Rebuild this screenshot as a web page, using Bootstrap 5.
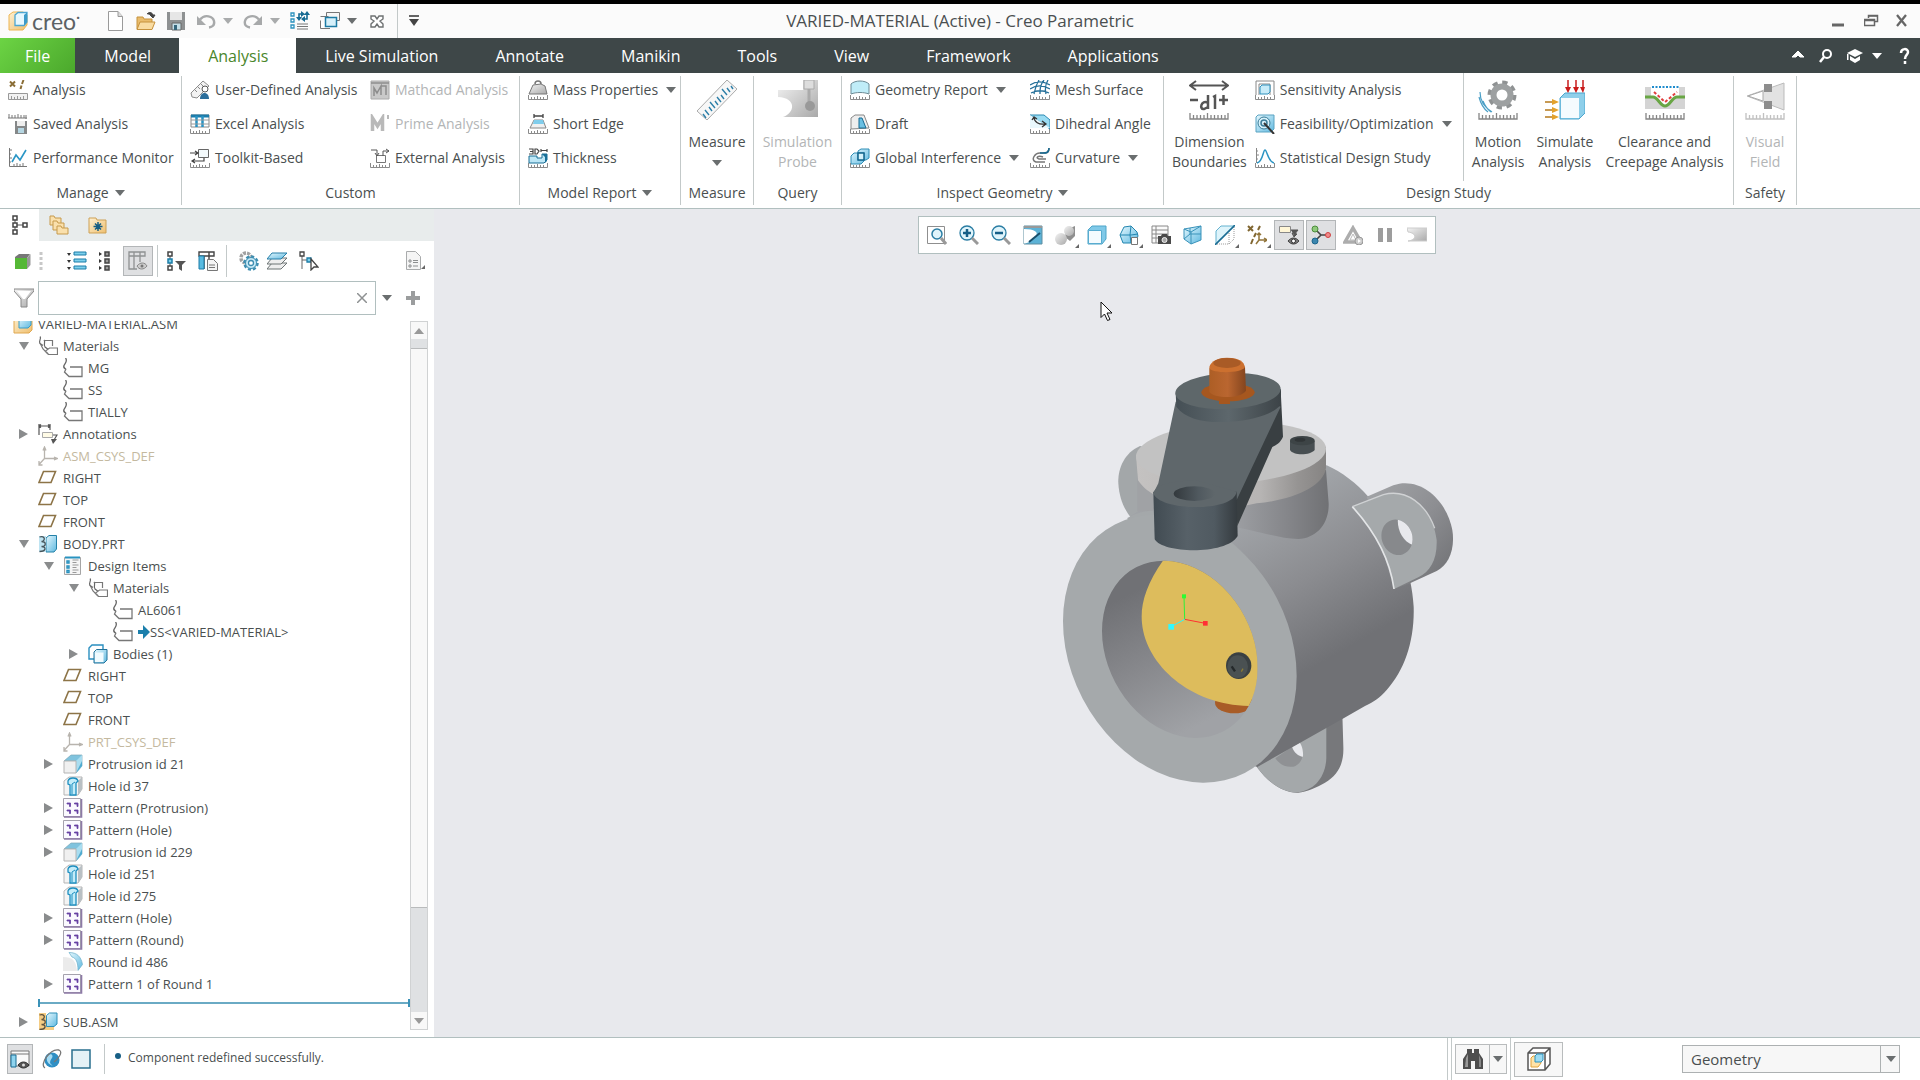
<!DOCTYPE html>
<html lang="en">
<head>
<meta charset="utf-8">
<meta name="viewport" content="width=device-width, initial-scale=1">
<title>VARIED-MATERIAL (Active) - Creo Parametric</title>
<link href="https://cdn.jsdelivr.net/npm/bootstrap@5.3.0/dist/css/bootstrap.min.css" rel="stylesheet">
<style>
  :root { --ink:#4a4f50; --edge:#b1bfbf; --line:#c3c9c9; --canvas:#e8e9ed; }
  body { font-family:"Open Sans","Noto Sans",sans-serif; font-size:14px; line-height:20px; color:var(--ink); background:#fff; border-top:4px solid #000; overflow:hidden; }
  body > header, body > nav, body > .ribbon, body > footer { flex-shrink:0; }
  svg { display:block; flex:none; }
  button { border:0; background:none; padding:0; color:inherit; font:inherit; }
  .ico { width:20px; height:20px; }
  .big { width:40px; height:40px; }
  .tri { width:0; height:0; border:5px solid transparent; border-top:6px solid #6a6e6f; border-bottom:0; flex:none; }
  .tri.pale { border-top-color:#a9abac; }
  .vline { width:1px; background:var(--line); align-self:stretch; flex:none; }
  /* title */
  .titlebar { height:34px; background:#fbfbfb; }
  .titlebar .side { flex:1 1 0; }
  .quick { gap:10px; }
  .quick .duo { display:flex; align-items:center; gap:7px; }
  .apptitle { font-size:17px; line-height:24px; }
  .logo { width:88px; }
  .brand { font-family:"Lato",sans-serif; font-size:23px; line-height:24px; color:#5c6264; }
  /* ribbon tabs */
  .tabstrip { height:35px; background:#3e4748; }
  .tabstrip a { color:#fff; font-size:16px; padding:0 28px 0 29px; text-decoration:none; }
  .tabstrip a.filetab { background:linear-gradient(135deg,#6cd444,#4ba82c); padding:0 25px; }
  .tabstrip a.current { background:#fff; color:#49862a; }
  /* ribbon */
  .ribbon { height:136px; border-bottom:1px solid var(--edge); background:#fff; }
  .grp { border-right:1px solid var(--line); margin:3px 0; flex:none; }
  .grp .foot { height:24px; display:flex; align-items:center; justify-content:center; gap:6px; }
  .grp .body { height:108px; padding-left:8px; margin-top:-3px; }
  .cmd { height:34px; display:flex; align-items:center; gap:5px; white-space:nowrap; text-align:left; }
  .cmd .tri { margin-left:3px; }
  .off { color:#b3b5b6; }
  .tall { display:flex; flex-direction:column; align-items:center; justify-content:flex-start; padding-top:7px; text-align:center; white-space:nowrap; }
  .tall svg { margin-bottom:12px; }
  .w-manage { width:182px; } .w-custom { width:338px; } .w-report { width:161px; } .w-measure { width:73px; }
  .w-query { width:88px; } .w-inspect { width:322px; } .w-study { width:570px; } .w-safety { width:63px; }
  .col-a { width:180px; } .col-b { width:208px; }
  /* left panel */
  .tree-pane { width:434px; background:#fff; }
  .pane-tabs { height:32px; background:#e8ecec; }
  .pane-tabs button { height:32px; width:39px; display:flex; align-items:center; justify-content:center; }
  .pane-tabs button.current { background:#fff; }
  .pane-tools { height:40px; padding:4px 0 4px 15px; }
  .pressed { background:#dfe0e2; border:1px solid #b3b6b8; }
  .find-row { padding-left:14px; }
  .find { width:338px; height:34px; border:1px solid var(--edge); }
  .find input { border:0; outline:0; height:30px; }
  .find-more { margin-left:6px; }
  .find-add { margin-left:14px; }
  .tree { font-size:13px; margin:6px 0 7px; }
  .tree ul { list-style:none; margin:0; padding:0; }
  .tree ul ul ul { padding-left:25px; }
  .tree ul.first { margin-top:-8px; padding-left:13px; }
  .node { height:22px; display:flex; align-items:center; gap:5px; white-space:nowrap; }
  .node .tw { width:20px; flex:none; padding-left:6px; }
  .dn { width:0; height:0; display:block; border:5px solid transparent; border-top:8px solid #8a8c8d; border-bottom:0; }
  .rt { width:0; height:0; display:block; border:5px solid transparent; border-left:9px solid #8a8c8d; border-right:0; }
  .faint { color:#c4b9a0; }
  .insert { height:16px; margin-left:25px; }
  .insert span { height:2px; background:#6aaac4; }
  .bar { width:18px; border:1px solid #d0d2d3; background:#dfe1e3; margin-right:6px; }
  .bar .arrow { height:17px; background:#f8f8f8; }
  .bar .thumb { background:#f8f8f8; border:1px solid #b9bbbc; border-width:1px 0; margin-top:9px; height:560px; }
  /* canvas */
  .canvas { background:var(--canvas); position:relative; overflow:hidden; min-width:0; }
  .floatbar { background:#fff; border:1px solid var(--edge); height:38px; padding:0 2px; margin-top:7px; z-index:2; }
  .floatbar button { width:30px; height:30px; margin:0 1px; display:flex; align-items:center; justify-content:center; position:relative; }
  .more::after { content:""; position:absolute; right:1px; bottom:2px; border:2px solid transparent; border-right-color:#666; border-bottom-color:#666; }
  .model { position:absolute; left:calc(50% - 137px); top:131px; width:440px; height:480px; }
  .pointer { position:absolute; left:calc(50% - 77px); top:92px; }
  /* status */
  .status { height:43px; border-top:1px solid var(--edge); }
  .status-left { gap:9px; padding-left:7px; }
  .status-left .pressed { width:26px; height:30px; padding:4px 2px; }
  .status-left .vline { height:30px; align-self:center; margin-left:4px; }
  .msg { font-size:12px; margin:0 0 3px 10px; gap:7px; }
  .msg i { width:6px; height:6px; border-radius:50%; background:#175f85; margin-top:-4px; }
  .status-right { gap:3px; }
  .box { border:1px solid #b9bcbd; background:#f7f7f7; }
  .seek { height:30px; width:52px; }
  .seek .seek-main { width:33px; display:flex; align-items:center; justify-content:center; }
  .seek .seek-more { width:17px; border-left:1px solid #b9bcbd; display:flex; align-items:center; justify-content:center; }
  .boxbtn { height:35px; width:49px; display:flex; align-items:center; justify-content:center; }
  .pick { width:218px; height:28px; margin:0 20px 0 119px; }
  .pick select { appearance:none; border:1px solid #adb1b2; background:#f7f7f7; color:var(--ink); border-radius:0; padding:0 8px; height:28px; width:100%; font-size:15px; }
  .pick span { position:absolute; right:0; top:0; width:20px; height:28px; border-left:1px solid #adb1b2; pointer-events:none; display:flex; align-items:center; justify-content:center; }
</style>
<script src="https://cdn.jsdelivr.net/npm/bootstrap@5.3.0/dist/js/bootstrap.bundle.min.js"></script>
</head>
<body class="vh-100 d-flex flex-column">

<svg width="0" height="0" class="position-absolute" aria-hidden="true">
  <defs>
    <linearGradient id="gBlue" x1="0" y1="0" x2="1" y2="1"><stop offset="0" stop-color="#e6f8fe"/><stop offset="1" stop-color="#5fb9e0"/></linearGradient>
    <linearGradient id="gGrey" x1="0" y1="0" x2="1" y2="1"><stop offset="0" stop-color="#f4f4f4"/><stop offset="1" stop-color="#a9a9a9"/></linearGradient>
    <linearGradient id="gTan" x1="0" y1="0" x2="1" y2="1"><stop offset="0" stop-color="#fff1d2"/><stop offset="1" stop-color="#eebf70"/></linearGradient>
    <symbol id="rl" viewBox="0 0 20 20"><path d="M.5 15v4.500h19V15M3.500 19v-2M6.500 19v-2M9.500 19v-3M12.500 19v-2M15.500 19v-2" fill="none" stroke="#8b8b8b"/></symbol>
    <symbol id="RL" viewBox="0 0 40 40"><path d="M1 33v6h38v-6M4.500 39v-4M8 39v-4M11.500 39v-4M15 39v-4M18.500 39v-6M22 39v-4M25.500 39v-4M29 39v-4M32.500 39v-4M36 39v-4" fill="none" stroke="#858585" stroke-width="1.300"/></symbol>
    <symbol id="tag" viewBox="0 0 20 20"><path d="M2.500 0c2.500 3-.5 5-1.500 7.500s1 3.500 4 5" fill="none" stroke="#666" stroke-width="1.300"/><path d="M7 9h12v9.500H6L1.500 14 3 11" fill="#fff" stroke="#777" stroke-width="1.300"/></symbol>
    <symbol id="tags" viewBox="0 0 20 20"><path d="M2 .5c2 2-2 5 0 7l3 2M6 4c2 2-1 4 1 7l4 3" fill="none" stroke="#666" stroke-width="1.200"/><path d="M7 4.500h7.500V10M2 7l3 6 5 5" fill="none" stroke="#777" stroke-width="1.200"/><path d="M11.500 12h8v6.500h-9L7.500 15z" fill="#fff" stroke="#777" stroke-width="1.200"/></symbol>
    <symbol id="plane" viewBox="0 0 20 20"><path d="M5.500 3.500h12l-4.500 11H1z" fill="#fff" stroke="#8d7447" stroke-width="1.600"/></symbol>
    <symbol id="csys" viewBox="0 0 20 20"><path d="M6.500 2v10.500h12M6.500 12.500L1 18.500M5 4.500L6.500 1 8 4.500M16 11l3.500 1.500L16 14M1 15v4h3.500" fill="none" stroke="#b8b4ae" stroke-width="1.300"/></symbol>
    <symbol id="anno" viewBox="0 0 20 20"><path d="M1 0v11M12 0v6M1 2h11M3 .5L1 2l2 1.500M10 .5L12 2l-2 1.500M15 11h4l-3 5" fill="none" stroke="#555" stroke-width="1.200"/><path d="M4.500 8.500h10v5h-10z" fill="#fffbe6" stroke="#aaa"/><path d="M13 15h6l-4 5z" fill="#555"/></symbol>
    <symbol id="asm" viewBox="0 0 20 20"><path d="M1 4l3-3h12v4h3v11l-3 3H1z" fill="url(#gTan)" stroke="#e0a850"/><path d="M6 4l2-2h10v9l-3 3H6z" fill="url(#gBlue)" stroke="#3a9cc6"/></symbol>
    <symbol id="part" viewBox="0 0 20 20"><path d="M8 4l3-2.500h7.500V15L16 18H8z" fill="url(#gBlue)" stroke="#2481a8"/><path d="M1 2h7v16H1z" fill="#bfe4f2"/><path d="M1.500 3c6-2 6 4 2 4.500 5 0 5 5 0 5 5 0 5 5-2 5" fill="none" stroke="#46545a" stroke-width="1.300"/></symbol>
    <symbol id="subasm" viewBox="0 0 20 20"><path d="M1 1h7v17H1zM8 14h8v4H8z" fill="#f5cd84"/><path d="M8.500 3.500l3-2.500h7.500v11l-3 2.500H8.500z" fill="url(#gBlue)" stroke="#2e8fb8"/><path d="M1.500 3c6-2 6 4 2 4.500 5 0 5 5 0 5 5 0 5 5-2 5" fill="none" stroke="#5d5240" stroke-width="1.300"/></symbol>
    <symbol id="items" viewBox="0 0 20 20"><path d="M1.500 1.500h16v17h-16z" fill="#f5f5f5" stroke="#a5a5a5"/><path d="M2 1.500h15" stroke="#2893c0" stroke-width="2"/><path d="M4 5h2v2H4zM4 10h2v2H4zM4 14.500h2v2H4z" fill="#fff" stroke="#2590be" stroke-width="1.400"/><path d="M9.500 4h6M9.500 6.500h4M9.500 9h6M9.500 11.500h4M9.500 14h6M9.500 16.500h4" stroke="#999"/></symbol>
    <symbol id="bodies" viewBox="0 0 20 20"><path d="M1 4l3-3h11v12l-3 2H1z" fill="#fff" stroke="#2a8fc0" stroke-width="1.400"/><path d="M6 8l2.500-2.500H19V16l-3 3H6z" fill="url(#gBlue)" stroke="#23729a"/><path d="M7 8.500h8.500V18H7z" fill="#f1fbff"/></symbol>
    <symbol id="prot" viewBox="0 0 20 20"><path d="M1 7l7-6h11v11l-6 7V7z" fill="#7fc3de" stroke="#7ba6b8" stroke-width=".7"/><path d="M19 1l-6 6v12l6-7z" fill="#a9ddf0"/><path d="M13 19l6-12v5z" fill="#4fabd0"/><path d="M1 7h12v12H1z" fill="#f0f0f0" stroke="#b4b4b4"/></symbol>
    <symbol id="hole" viewBox="0 0 20 20"><path d="M1 5l5-4h13v12l-4 6H1z" fill="#f4f4f4" stroke="#b5b5b5"/><path d="M15 5l4-4v12l-4 6z" fill="#b9c0c4"/><path d="M5 8V5c1-4 9-4 10 0l-2 2v12H7V9z" fill="#c4ecf9" stroke="#1e8fc0" stroke-width="1.300"/><path d="M9 18V8l3-2" fill="none" stroke="#1e8fc0"/></symbol>
    <symbol id="patt" viewBox="0 0 20 20"><path d="M.5.500h17v18H.5z" fill="#fbfaff" stroke="#a5a2ad"/><path d="M18.500 1v18H1" fill="none" stroke="#8d7aa6" stroke-width="1.600"/><path d="M4 5h3.500v3.500h-1V6H4zM11.500 5H15v3.500h-1V6h-2.500zM4 12h3.500v3.500h-1V13H4zM11.500 12H15v3.500h-1V13h-2.500z" fill="#6842a3" stroke="#6842a3" stroke-width=".8"/></symbol>
    <symbol id="round" viewBox="0 0 20 20"><path d="M0 5c10 0 13 4 14 14H0z" fill="#ebebeb"/><path d="M6 .5c8 0 12 4 13.500 12L15 18.500C15 10 13 6 9 5z" fill="url(#gBlue)" stroke="#68aec8" stroke-width=".7"/></symbol>
    <symbol id="undo" viewBox="0 0 20 20"><path d="M4 8.500c5-6 13-3 14 1.500s-2 6-5 6.500" fill="none" stroke="#a7a9aa" stroke-width="2.400"/><path d="M1 5v9h9z" fill="#a7a9aa"/></symbol>
  </defs>
</svg>

<header class="titlebar d-flex align-items-center">
  <div class="quick side d-flex align-items-center align-self-stretch ps-2">
    <span class="logo d-flex align-items-center gap-1">
      <svg class="ico" viewBox="0 0 20 20"><path d="M1 4l4-3h10l4 3v10l-4 5H1z" fill="url(#gTan)" stroke="#edb552"/><path d="M7 4l3-2.500h9V11l-3 3.500H7z" fill="#e7f8ff" stroke="#4ca6d2" stroke-width="1.300"/><path d="M16 4l3-2.500V11l-3 3.500z" fill="#3c9bc9"/></svg>
      <span class="brand">creo<sup class="fs-6">·</sup></span>
    </span>
    <button aria-label="New"><svg class="ico" viewBox="0 0 20 20"><path d="M2.500.500h9.500l4.500 5v14h-14z" fill="#fff" stroke="#9a9a9a"/><path d="M12 .5v5h4.500" fill="#ddd" stroke="#9a9a9a"/></svg></button>
    <button aria-label="Open"><svg class="ico" viewBox="0 0 20 20"><path d="M1 18V6h6l1 2h8v10z" fill="#e9bc6c" stroke="#c6923d"/><path d="M1 18.500L4 11h15l-3 7.500z" fill="#f9dca2" stroke="#c6923d"/><path d="M11 3c3-3 6-1 6 2M14 4h5l-2 3z" fill="#444" stroke="#444"/></svg></button>
    <button aria-label="Save"><svg class="ico" viewBox="0 0 20 20"><path d="M1 1h18v18H1z" fill="#8e9192"/><path d="M4 1h12v8H4z" fill="#e6e6e6"/><path d="M6 12h9v7H6z" fill="#c4dfe8" stroke="#666"/><path d="M8 14h3v5H8z" fill="#35667b"/></svg></button>
    <button class="duo" aria-label="Undo"><svg class="ico"><use href="#undo"/></svg><i class="tri pale"></i></button>
    <button class="duo" aria-label="Redo"><svg class="ico" viewBox="0 0 20 20"><g transform="matrix(-1 0 0 1 20 0)"><use href="#undo" width="20" height="20"/></g></svg><i class="tri pale"></i></button>
    <button aria-label="Regenerate"><svg class="ico" viewBox="0 0 20 20"><path d="M1 2h3v3H1zM1 8h3v3H1zM1 14h3v3H1z" fill="#fff" stroke="#2d92be" stroke-width="1.300"/><path d="M7 13h11M7 15.500h11M7 18h11" stroke="#777"/><path d="M9 7V3h3M17 3v5h-3" fill="none" stroke="#176b93" stroke-width="1.600"/><path d="M11 0l4 3-4 3zM15 5l-4 3 4 3zM6 6l3 4 3-4zM14 4l3-4 3 4z" fill="#176b93"/></svg></button>
    <button class="duo" aria-label="Windows"><svg class="ico" viewBox="0 0 20 20"><path d="M6.500 1.500h13v8h-13z" fill="#f6f6f6" stroke="#777"/><path d="M.5 9.500v8H10M.5 5.500h8" fill="#fff" stroke="#777"/><path d="M5.500 6.500h11v9h-11z" fill="#d6f0fa" stroke="#1d7ba5" stroke-width="1.500"/></svg><i class="tri"></i></button>
    <button aria-label="Close window"><svg class="ico" viewBox="0 0 20 20"><path d="M4 5h4l2 3 2-3h4v3l-3 2 3 3v3h-4l-2-3-2 3H4v-3l3-3-3-2z" fill="#fff" stroke="#6e7172" stroke-width="1.400"/></svg></button>
    <span class="vline"></span>
    <button aria-label="Customize"><svg width="12" height="14" viewBox="0 0 12 14"><path d="M1 2h10" stroke="#333" stroke-width="1.500"/><path d="M1 5h10l-5 7z" fill="#444"/></svg></button>
  </div>
  <div class="apptitle">VARIED-MATERIAL (Active) - Creo Parametric</div>
  <div class="side d-flex justify-content-end align-items-center gap-3 pe-2">
    <button aria-label="Minimize"><svg width="16" height="16"><path d="M0 12h12" stroke="#666" stroke-width="3"/></svg></button>
    <button aria-label="Restore"><svg width="16" height="16" viewBox="0 0 16 16"><path d="M4.500 5V2.500h9v6H11" fill="none" stroke="#666" stroke-width="1.500"/><path d="M.5 6.500h10v6H.5zM4.500 3h9M1 7.500h9" fill="none" stroke="#666" stroke-width="1.500"/></svg></button>
    <button aria-label="Close"><svg width="16" height="16"><path d="M1 2l9 11M10 2L1 13" stroke="#666" stroke-width="2.300"/></svg></button>
  </div>
</header>

<nav class="tabstrip d-flex">
  <a class="filetab d-flex align-items-center" href="#">File</a>
  <a class="d-flex align-items-center" href="#">Model</a>
  <a class="current d-flex align-items-center" href="#">Analysis</a>
  <a class="d-flex align-items-center" href="#">Live Simulation</a>
  <a class="d-flex align-items-center" href="#">Annotate</a>
  <a class="d-flex align-items-center" href="#">Manikin</a>
  <a class="d-flex align-items-center" href="#">Tools</a>
  <a class="d-flex align-items-center" href="#">View</a>
  <a class="d-flex align-items-center" href="#">Framework</a>
  <a class="d-flex align-items-center" href="#">Applications</a>
  <div class="ms-auto d-flex align-items-center gap-2 pe-2">
    <button aria-label="Collapse ribbon"><svg width="16" height="16"><path d="M2 9l6-6 6 6h-4L8 7 6 9z" fill="#fff" stroke="#fff"/></svg></button>
    <button class="ms-1" aria-label="Search"><svg width="16" height="16"><circle cx="9" cy="6" r="4" fill="none" stroke="#fff" stroke-width="2"/><path d="M6 9l-4 5" stroke="#fff" stroke-width="2.500"/></svg></button>
    <button class="ms-1 d-flex align-items-center gap-2" aria-label="Learning"><svg width="18" height="16"><path d="M1 5l8-4 8 4-8 4z" fill="#fff"/><path d="M4 8v4l5 3 5-3V8l-5 3zM1 6h1.500v6H1z" fill="#fff"/></svg><svg width="10" height="8"><path d="M0 1h10L5 7z" fill="#fff"/></svg></button>
    <button class="ms-2" aria-label="Help"><svg width="14" height="18" viewBox="0 0 14 18"><path d="M3 6c0-5 7-5 7-1 0 3-3 3-3 7M7 14v3" fill="none" stroke="#fff" stroke-width="2.500"/></svg></button>
  </div>
</nav>

<section class="ribbon d-flex" aria-label="Analysis ribbon">
  <div class="grp w-manage">
    <div class="body">
      <button class="cmd"><svg class="ico" viewBox="0 0 20 20"><path d="M2 1.500l5 5M7 1.500l-5 5M15.500 0l-1.500 4M13.500 5.500L12.500 9" stroke="#8a6d35" stroke-width="2"/><path d="M.5 13.500h19v6H.5z" fill="#f2f2f2" stroke="#999"/><path d="M3.500 19v-3M6.500 19v-2M9.500 19v-3M12.500 19v-2M15.500 19v-3" stroke="#999"/></svg>Analysis</button>
      <button class="cmd"><svg class="ico" viewBox="0 0 20 20"><path d="M0 4h19M1 4V0M4 4V1M7 4V1M10 4V0M13 4V1M16 4V1M18 5V1" stroke="#777"/><path d="M7 7h12v13H7z" fill="#858889"/><path d="M9 7h8v5H9z" fill="#eee"/><path d="M10 14h6v5h-6z" fill="#b5d6e2"/></svg>Saved Analysis</button>
      <button class="cmd"><svg class="ico" viewBox="0 0 20 20"><path d="M1.500 0v18.500H19M1 2h3M1 6h2M1 10h3M1 14h2M6 18v-2M9 18v-3M12 18v-2M15 18v-3" fill="none" stroke="#777"/><path d="M4 14l4-7 4 5 6-10" fill="none" stroke="#2a96c6" stroke-width="1.600"/></svg>Performance Monitor</button>
    </div>
    <div class="foot">Manage<i class="tri"></i></div>
  </div>

  <div class="grp w-custom">
    <div class="body d-flex">
      <div class="col-a">
        <button class="cmd"><svg class="ico" viewBox="0 0 20 20"><path d="M1 13L13 1l6 5L7 18l-5-1z" fill="#f3f3f3" stroke="#8c8c8c"/><path d="M5 10l2 2M8 7l2 2M11 4l2 2" stroke="#888"/><circle cx="15" cy="9" r="3" fill="#fff" stroke="#555"/><path d="M10 19c0-8 9-8 9 0z" fill="#2c6e9b"/></svg>User-Defined Analysis</button>
        <button class="cmd"><svg class="ico" viewBox="0 0 20 20"><path d="M1 1h18v12H1z" fill="#fff" stroke="#888"/><path d="M1 2h18" stroke="#1c7caa" stroke-width="3"/><path d="M6.500 2v11M12.500 2v11" stroke="#2793c4" stroke-width="2.500"/><path d="M1 6h18M1 10h18" stroke="#999"/><use href="#rl" width="20" height="20"/></svg>Excel Analysis</button>
        <button class="cmd"><svg class="ico" viewBox="0 0 20 20"><path d="M8.500 1.500h10v8h-10z" fill="#f3f9fb" stroke="#666"/><path d="M0 5h7M5 3l3 2-3 2M14 10v3H2M5 11l-3 2 3 2" fill="none" stroke="#444" stroke-width="1.200"/><use href="#rl" width="20" height="20"/></svg>Toolkit-Based</button>
      </div>
      <div>
        <button class="cmd off" disabled><svg class="ico" viewBox="0 0 20 20"><path d="M1 1h18v18H1z" fill="#c9c9c9" stroke="#aaa"/><path d="M1 3h18M4 16V8l3 5 4-7v9M11 6h5v9" fill="none" stroke="#8d8d8d" stroke-width="1.500"/></svg>Mathcad Analysis</button>
        <button class="cmd off" disabled><svg class="ico" viewBox="0 0 20 20"><path d="M2.500 17V4l5 8 5-8v13" fill="none" stroke="#b9b9b9" stroke-width="3.500"/><path d="M18 1v4" stroke="#b9b9b9" stroke-width="2"/></svg>Prime Analysis</button>
        <button class="cmd"><svg class="ico" viewBox="0 0 20 20"><path d="M6.500 7.500h9v7h-9z" fill="#fff" stroke="#777"/><path d="M1 2h6v5M5 5l2 3 2-3M13 8V3h6M16 1l3 2-3 2" fill="none" stroke="#555"/><use href="#rl" width="20" height="20"/></svg>External Analysis</button>
      </div>
    </div>
    <div class="foot">Custom</div>
  </div>

  <div class="grp w-report">
    <div class="body">
      <button class="cmd"><svg class="ico" viewBox="0 0 20 20"><path d="M7 4c0-4 6-4 6 0" fill="none" stroke="#777" stroke-width="1.500"/><path d="M5 5l8-1 4 2 2 8H1z" fill="url(#gGrey)" stroke="#777"/><use href="#rl" width="20" height="20"/></svg>Mass Properties<i class="tri"></i></button>
      <button class="cmd"><svg class="ico" viewBox="0 0 20 20"><path d="M6 0v4M15 0v4M6 2h9" stroke="#444" stroke-width="1.300"/><path d="M6 6h9l3 8H2z" fill="#f0f0f0" stroke="#888"/><path d="M6 6h9l1 4H5z" fill="#7fcdec"/><use href="#rl" width="20" height="20"/></svg>Short Edge</button>
      <button class="cmd"><svg class="ico" viewBox="0 0 20 20"><path d="M1 1h4v5H1M2 3.500h3M7 1h2l2 2-2 3H7zM13 1v3M19 1v3M13 2.500h6" fill="none" stroke="#444" stroke-width="1.200"/><path d="M1 8h8v2h5V6h5v6l-3 3H1z" fill="#bfe8f7" stroke="#166c94"/><path d="M14 6h5v7l-2 2v-6z" fill="#186f98"/><use href="#rl" width="20" height="20"/></svg>Thickness</button>
    </div>
    <div class="foot">Model Report<i class="tri"></i></div>
  </div>

  <div class="grp w-measure">
    <div class="body p-0"><button class="tall w-100"><svg class="big" viewBox="0 0 40 40"><path d="M0 31L30 0l10 9L10 40z" fill="#f7f7f7" stroke="#aaa"/><path d="M9 38l-3-4M12 35l-4-5M15 31l-3-4M18 28l-5-6M21 25l-3-4M24 22l-4-5M27 19l-3-4M30 15l-5-6M33 12l-3-4M36 9l-2-3" stroke="#2d7fa8" stroke-width="1.400"/></svg>Measure<i class="tri mt-2"></i></button></div>
    <div class="foot">Measure</div>
  </div>

  <div class="grp w-query">
    <div class="body p-0"><button class="tall w-100 off" disabled><svg class="big" viewBox="0 0 40 40"><path d="M0 10h25v-10h15v37H5c12-4 14-19-5-20z" fill="url(#gGrey)"/><path d="M26 0h10v9h-10z" fill="#ddd" stroke="#aaa"/><path d="M31 9v14" stroke="#aaa" stroke-width="3"/><circle cx="32" cy="26" r="5" fill="#999"/></svg>Simulation<br>Probe</button></div>
    <div class="foot">Query</div>
  </div>

  <div class="grp w-inspect">
    <div class="body d-flex">
      <div class="col-a">
        <button class="cmd"><svg class="ico" viewBox="0 0 20 20"><path d="M1 14V4c4-4 14-4 18 0v10c-5-2-13-2-18 0z" fill="#c0edf8" stroke="#6d8b95"/><use href="#rl" width="20" height="20"/></svg>Geometry Report<i class="tri"></i></button>
        <button class="cmd"><svg class="ico" viewBox="0 0 20 20"><path d="M1 15V4l4-3h9l5 13z" fill="#eee" stroke="#888"/><path d="M9 14V4h3l4 10z" fill="#69bfe2" stroke="#176a92"/><use href="#rl" width="20" height="20"/></svg>Draft</button>
        <button class="cmd"><svg class="ico" viewBox="0 0 20 20"><path d="M1 8l3-3h10v8l-3 3H1zM8 3l3-2h8v9l-3 2H8z" fill="url(#gBlue)" stroke="#2f8eb6"/><path d="M8 5h6v7H8z" fill="#d5f2fb" stroke="#12648c" stroke-width="1.500"/><use href="#rl" width="20" height="20"/></svg>Global Interference<i class="tri"></i></button>
      </div>
      <div>
        <button class="cmd"><svg class="ico" viewBox="0 0 20 20"><path d="M0 5c6-4 13-4 20 0M0 9c6-4 13-4 20 0M1 13c6-3 12-3 18 0M4 14C5 9 6 5 9 0M10 14c0-5 0-9 4-14M16 14c-1-4-1-9 2-14" fill="none" stroke="#27719a" stroke-width="1.300"/><use href="#rl" width="20" height="20"/></svg>Mesh Surface</button>
        <button class="cmd"><svg class="ico" viewBox="0 0 20 20"><path d="M0 1h14l6 5v9z" fill="#9adcf3" stroke="#2c8ab3"/><path d="M0 1l20 13H0z" fill="#e9f8fd"/><path d="M4 3c0 5 5 8 11 7M12 7l4 3-4 3M2 6l2-3 3 2" fill="none" stroke="#333" stroke-width="1.300"/><use href="#rl" width="20" height="20"/></svg>Dihedral Angle</button>
        <button class="cmd"><svg class="ico" viewBox="0 0 20 20"><path d="M19 0c0 6-4 5-9 5S0 12 6 14h9M13 9c-5-2-8 1-4 2h7" fill="none" stroke="#777" stroke-width="1.500"/><path d="M19 0c0 6-4 5-9 5" fill="none" stroke="#176b93" stroke-width="1.500"/><use href="#rl" width="20" height="20"/></svg>Curvature<i class="tri"></i></button>
      </div>
    </div>
    <div class="foot">Inspect Geometry<i class="tri"></i></div>
  </div>

  <div class="grp w-study">
    <div class="body d-flex p-0">
      <button class="tall px-2"><svg class="big" viewBox="0 0 40 40"><path d="M2 5.500h36M7 1L1 5.500 7 10M33 1l6 4.500-6 4.500" fill="none" stroke="#555" stroke-width="2"/><path d="M1 20h8M30 20h9M34.500 15v10M19 15v14M19 23c-7-4-9 7-4 6l4-2M24 17l2-1v13" fill="none" stroke="#555" stroke-width="2.500"/><use href="#RL" width="40" height="40"/></svg>Dimension<br>Boundaries</button>
      <div class="col-b">
        <button class="cmd"><svg class="ico" viewBox="0 0 20 20"><path d="M1 15V1h18v14M4 15V4h11v11" fill="none" stroke="#888"/><path d="M5 7l2-2h8v7l-2 2H5z" fill="#c7ebf8" stroke="#2f91bd"/><use href="#rl" width="20" height="20"/></svg>Sensitivity Analysis</button>
        <button class="cmd"><svg class="ico" viewBox="0 0 20 20"><path d="M1 3l2-2h16v14l-3 3H1z" fill="url(#gBlue)" stroke="#5aa3c2"/><circle cx="9" cy="9" r="6" fill="#d7f2fb" stroke="#3b7c98"/><circle cx="9" cy="9" r="3" fill="none" stroke="#3b7c98" stroke-width="1.500"/><path d="M9 9l10 11" stroke="#333" stroke-width="2"/></svg>Feasibility/Optimization<i class="tri"></i></button>
        <button class="cmd"><svg class="ico" viewBox="0 0 20 20"><path d="M1.500 0v15M1 3h2M1 7h3M1 11h2" stroke="#888"/><path d="M2 15c6-1 6-13 8-13s3 12 9 13" fill="none" stroke="#2b94c3" stroke-width="1.500"/><use href="#rl" width="20" height="20"/></svg>Statistical Design Study</button>
      </div>
      <span class="vline"></span>
      <button class="tall px-2"><svg class="big" viewBox="0 0 40 40"><circle cx="24" cy="15" r="12" fill="none" stroke="#8f9293" stroke-width="5" stroke-dasharray="5 4.400"/><circle cx="24" cy="15" r="8.500" fill="none" stroke="#9da0a1" stroke-width="6"/><path d="M2 12c0 8 4 15 12 20M5 21c2 5 4 8 8 11M1 17c2 8 5 12 9 15" fill="none" stroke="#4a9fc6" stroke-width="1.200"/><use href="#RL" width="40" height="40"/></svg>Motion<br>Analysis</button>
      <button class="tall mx-1"><svg class="big" viewBox="0 0 40 40"><path d="M15 18l5-5h20v20l-6 6H15z" fill="#8ecfea" stroke="#4da6ce"/><path d="M16 18h18v20H16z" fill="#f5fbfe"/><path d="M23 0v10M31 0v10M38 0v10" stroke="#c91c1c" stroke-width="1.500"/><path d="M20 7h6l-3 6zM28 7h6l-3 6zM35 7h5l-2 6z" fill="#c91c1c"/><path d="M0 22h9M0 30h9M0 37h9" stroke="#b5791d" stroke-width="1.500"/><path d="M7 19l7 3-7 3zM7 27l7 3-7 3zM7 34l7 3-7 3z" fill="#e3a22c"/></svg>Simulate<br>Analysis</button>
      <button class="tall px-2"><svg class="big" viewBox="0 0 40 40"><path d="M0 7h40v22H0z" fill="#d4d4d4"/><path d="M6 7h28v10l-5 1-8 8-8-7-7-2z" fill="#fff"/><path d="M0 17h8c5 0 7 9 12 9s7-9 12-9h8" fill="none" stroke="#69a645" stroke-width="3"/><path d="M7 7h27" stroke="#1f8ccd" stroke-width="2" stroke-dasharray="2 1.500"/><path d="M9 12l11 10 12-10" fill="none" stroke="#e23e3e" stroke-width="2" stroke-dasharray="3 2"/><use href="#RL" width="40" height="40"/></svg>Clearance and<br>Creepage Analysis</button>
    </div>
    <div class="foot">Design Study</div>
  </div>

  <div class="grp w-safety">
    <div class="body p-0"><button class="tall w-100 off" disabled><svg class="big" viewBox="0 0 40 40"><path d="M39 3L2 16l37 14z" fill="#e2e2e2" stroke="#bbb"/><path d="M3 16l15-5v10z" fill="#fff" stroke="#aaa"/><path d="M19 4h8v8h-8zM19 21h8v8h-8z" fill="#8d8d8d"/><use href="#RL" width="40" height="40" opacity=".5"/></svg>Visual<br>Field</button></div>
    <div class="foot">Safety</div>
  </div>
</section>

<main class="d-flex flex-grow-1 overflow-hidden">
  <aside class="tree-pane d-flex flex-column flex-shrink-0">
    <div class="pane-tabs d-flex flex-shrink-0">
      <button class="current" aria-label="Model Tree"><svg class="ico" viewBox="0 0 20 20"><path d="M5 3v14M5 10h10" stroke="#555"/><path d="M3 1h4v4H3zM3 8h4v4H3zM3 15h4v4H3zM13 8h4v4h-4z" fill="#fff" stroke="#444" stroke-width="1.500"/></svg></button>
      <button aria-label="Folder Browser"><svg class="ico" viewBox="0 0 20 20"><g fill="#fae0ac" stroke="#c69a4c"><path d="M1 1h4l1 2h6v7H1z"/><path d="M4 6h4l1 2h6v7H4z"/><path d="M8 11h4l1 2h6v6H8z"/></g></svg></button>
      <button aria-label="Favorites"><svg class="ico" viewBox="0 0 20 20"><path d="M1 3h7l1 2h9v13H1z" fill="url(#gTan)" stroke="#cda157"/><path d="M10 7v9M5.500 11.500h9M7 8.500l6 6M13 8.500l-6 6" stroke="#165e84" stroke-width="1.500"/></svg></button>
    </div>
    <div class="pane-tools d-flex align-items-center flex-shrink-0">
      <button aria-label="Parts"><svg class="ico" viewBox="0 0 20 20"><path d="M0 7h12v11H0z" fill="#55b836"/><path d="M0 6l4-3h11l-3 4H0z" fill="#777"/><path d="M12 7l3.500-4v11L12 18z" fill="#999"/></svg></button>
      <svg width="8" height="20"><path d="M6 1v18" stroke="#c8c8c8" stroke-width="3" stroke-dasharray="3 2"/></svg>
      <button class="ms-4" aria-label="Expand"><svg class="ico" viewBox="0 0 20 20"><path d="M0 2h4L2 5zM0 9h4l-2 3zM0 16h4l-2 3z" fill="#333"/><path d="M7 1h12v3H7zM7 8h12v3H7zM7 15h12v3H7z" fill="#7dd0ec" stroke="#1d7da8"/></svg></button>
      <button class="ms-2" aria-label="Collapse"><svg class="ico" viewBox="0 0 20 20"><path d="M4 1l3 2-3 2zM4 8l3 2-3 2zM4 15l3 2-3 2z" fill="#333"/><path d="M10 1h4v4h-4zM10 8h4v4h-4zM10 15h4v4h-4z" fill="#999" stroke="#444" stroke-width="1.500"/></svg></button>
      <button class="pressed ms-2 p-1" aria-label="Columns"><svg class="ico" viewBox="0 0 20 20"><path d="M1 1h16v4H1zM1 5h5v13H1zM6 1v17M12 1v10M6 5v13h3" fill="none" stroke="#8f9192" stroke-width="1.300"/><path d="M9 15c3-4 8-4 10 0-3 4-8 4-10 0z" fill="#ccc" stroke="#888"/><circle cx="14" cy="15" r="1.500" fill="#777"/></svg></button>
      <span class="vline ms-1"></span>
      <button class="ms-2" aria-label="Tree filters"><svg class="ico" viewBox="0 0 20 20"><path d="M4 3v14" stroke="#555"/><path d="M2 1h4v4H2zM2 15h4v4H2z" fill="#fff" stroke="#444" stroke-width="1.500"/><path d="M2 8h4v4H2z" fill="#7dd0ec" stroke="#1d7da8" stroke-width="1.500"/><path d="M9 10h11l-4 4v6l-3-2v-4z" fill="#555"/></svg></button>
      <button class="ms-2 ps-1" aria-label="Tree columns"><svg class="ico" viewBox="0 0 20 20"><path d="M1 1h15v4H1zM6 5v13M11 1v7" fill="none" stroke="#444" stroke-width="1.400"/><path d="M1 5h5v13H1z" fill="#59bbe1" stroke="#1d7da8"/><path d="M9.500 8.500h6l4 4v7h-10z" fill="#f5f5f5" stroke="#777"/><path d="M11 14h6M11 16.500h6" stroke="#777"/></svg></button>
      <span class="vline ms-2"></span>
      <button class="ms-2 ps-1" aria-label="Settings"><svg class="ico" viewBox="0 0 20 20"><circle cx="7" cy="7" r="5" fill="none" stroke="#a2a2a2" stroke-width="3.500" stroke-dasharray="3 1"/><circle cx="12" cy="12" r="6.500" fill="#c6e9f6" stroke="#3d8db0" stroke-width="2.500" stroke-dasharray="3 2"/><circle cx="12" cy="12" r="5.500" fill="#c6e9f6" stroke="#3d8db0"/><circle cx="12" cy="12" r="2.500" fill="#fff" stroke="#3d8db0" stroke-width="1.300"/></svg></button>
      <button class="ms-2" aria-label="Layers"><svg class="ico" viewBox="0 0 20 20"><g stroke="#6d7475"><path d="M0 18l5-6h15l-6 6z" fill="#eee"/><path d="M0 13l5-6h15l-6 6z" fill="#eee"/><path d="M0 8l5-6h15l-6 6z" fill="url(#gBlue)" stroke="#267fa8"/></g></svg></button>
      <button class="ms-2 ps-1" aria-label="Select in tree"><svg class="ico" viewBox="0 0 20 20"><path d="M3 5v13M3 9h7" stroke="#666"/><path d="M1 1h4v4H1z" fill="#fff" stroke="#444" stroke-width="1.300"/><path d="M8 7h4v4H8z" fill="#7dd0ec" stroke="#1d7da8" stroke-width="1.300"/><path d="M12 8l7 8h-4l-3 3z" fill="#fff" stroke="#444" stroke-width="1.300"/></svg></button>
      <button class="ms-auto me-2 more position-relative" aria-label="Tree options"><svg class="ico" viewBox="0 0 20 20"><path d="M.5.500h9l5 5v13H.5z" fill="#f5f5f5" stroke="#a9abac"/><path d="M3 9h2v2H3zM3 14h2v2H3zM7 9.500h5M7 11.500h5M7 15h5" fill="none" stroke="#8d8f90"/></svg></button>
    </div>
    <div class="find-row d-flex align-items-center flex-shrink-0">
      <svg class="ico me-1" viewBox="0 0 20 20"><path d="M0 1h20v2l-7 8v8H7v-8L0 3z" fill="url(#gGrey)" stroke="#888"/><path d="M3 3h14l-6 8H9z" fill="#fff"/></svg>
      <div class="find d-flex align-items-center pe-1">
        <input class="flex-grow-1" type="text" aria-label="Search the tree">
        <button class="me-1" aria-label="Clear"><svg width="10" height="10"><path d="M0 0l10 10M10 0L0 10" stroke="#8e9192" stroke-width="1.500"/></svg></button>
      </div>
      <button class="find-more" aria-label="Search history"><i class="tri d-block"></i></button>
      <button class="find-add" aria-label="Add filter"><svg width="14" height="14"><path d="M7 0v14M0 7h14" stroke="#9b9d9e" stroke-width="4"/></svg></button>
    </div>
    <div class="tree d-flex flex-grow-1 overflow-hidden">
      <div class="flex-grow-1 overflow-hidden">
        <ul class="first">
          <li><div class="node"><svg class="ico"><use href="#asm"/></svg>VARIED-MATERIAL.ASM</div>
          <ul>
            <li><div class="node"><span class="tw"><i class="dn"></i></span><svg class="ico"><use href="#tags"/></svg>Materials</div>
              <ul>
                <li class="node"><span class="tw"></span><svg class="ico"><use href="#tag"/></svg>MG</li>
                <li class="node"><span class="tw"></span><svg class="ico"><use href="#tag"/></svg>SS</li>
                <li class="node"><span class="tw"></span><svg class="ico"><use href="#tag"/></svg>TIALLY</li>
              </ul></li>
            <li class="node"><span class="tw"><i class="rt"></i></span><svg class="ico"><use href="#anno"/></svg>Annotations</li>
            <li class="node faint"><span class="tw"></span><svg class="ico"><use href="#csys"/></svg>ASM_CSYS_DEF</li>
            <li class="node"><span class="tw"></span><svg class="ico"><use href="#plane"/></svg>RIGHT</li>
            <li class="node"><span class="tw"></span><svg class="ico"><use href="#plane"/></svg>TOP</li>
            <li class="node"><span class="tw"></span><svg class="ico"><use href="#plane"/></svg>FRONT</li>
            <li><div class="node"><span class="tw"><i class="dn"></i></span><svg class="ico"><use href="#part"/></svg>BODY.PRT</div>
              <ul>
                <li><div class="node"><span class="tw"><i class="dn"></i></span><svg class="ico"><use href="#items"/></svg>Design Items</div>
                  <ul>
                    <li><div class="node"><span class="tw"><i class="dn"></i></span><svg class="ico"><use href="#tags"/></svg>Materials</div>
                      <ul>
                        <li class="node"><span class="tw"></span><svg class="ico"><use href="#tag"/></svg>AL6061</li>
                        <li class="node"><span class="tw"></span><svg class="ico"><use href="#tag"/></svg><span class="d-flex align-items-center"><svg width="12" height="14"><path d="M0 5h5V0l7 7-7 7V9H0z" fill="#1b7fac"/></svg>SS&lt;VARIED-MATERIAL&gt;</span></li>
                      </ul></li>
                    <li class="node"><span class="tw"><i class="rt"></i></span><svg class="ico"><use href="#bodies"/></svg>Bodies (1)</li>
                  </ul></li>
                <li class="node"><span class="tw"></span><svg class="ico"><use href="#plane"/></svg>RIGHT</li>
                <li class="node"><span class="tw"></span><svg class="ico"><use href="#plane"/></svg>TOP</li>
                <li class="node"><span class="tw"></span><svg class="ico"><use href="#plane"/></svg>FRONT</li>
                <li class="node faint"><span class="tw"></span><svg class="ico"><use href="#csys"/></svg>PRT_CSYS_DEF</li>
                <li class="node"><span class="tw"><i class="rt"></i></span><svg class="ico"><use href="#prot"/></svg>Protrusion id 21</li>
                <li class="node"><span class="tw"></span><svg class="ico"><use href="#hole"/></svg>Hole id 37</li>
                <li class="node"><span class="tw"><i class="rt"></i></span><svg class="ico"><use href="#patt"/></svg>Pattern (Protrusion)</li>
                <li class="node"><span class="tw"><i class="rt"></i></span><svg class="ico"><use href="#patt"/></svg>Pattern (Hole)</li>
                <li class="node"><span class="tw"><i class="rt"></i></span><svg class="ico"><use href="#prot"/></svg>Protrusion id 229</li>
                <li class="node"><span class="tw"></span><svg class="ico"><use href="#hole"/></svg>Hole id 251</li>
                <li class="node"><span class="tw"></span><svg class="ico"><use href="#hole"/></svg>Hole id 275</li>
                <li class="node"><span class="tw"><i class="rt"></i></span><svg class="ico"><use href="#patt"/></svg>Pattern (Hole)</li>
                <li class="node"><span class="tw"><i class="rt"></i></span><svg class="ico"><use href="#patt"/></svg>Pattern (Round)</li>
                <li class="node"><span class="tw"></span><svg class="ico"><use href="#round"/></svg>Round id 486</li>
                <li class="node"><span class="tw"><i class="rt"></i></span><svg class="ico"><use href="#patt"/></svg>Pattern 1 of Round 1</li>
              </ul></li>
            <li class="insert d-flex align-items-center"><svg width="2" height="8"><path d="M1 0v8" stroke="#3b92b8" stroke-width="2"/></svg><span class="flex-grow-1"></span><svg width="2" height="8"><path d="M1 0v8" stroke="#3b92b8" stroke-width="2"/></svg></li>
            <li class="node"><span class="tw"><i class="rt"></i></span><svg class="ico"><use href="#subasm"/></svg>SUB.ASM</li>
          </ul></li>
        </ul>
      </div>
      <div class="bar d-flex flex-column flex-shrink-0">
        <div class="arrow d-flex align-items-center justify-content-center"><svg width="10" height="6"><path d="M0 6h10L5 0z" fill="#999"/></svg></div>
        <div class="thumb"></div>
        <div class="arrow mt-auto d-flex align-items-center justify-content-center"><svg width="10" height="6"><path d="M0 0h10L5 6z" fill="#999"/></svg></div>
      </div>
    </div>
  </aside>

  <section class="canvas flex-grow-1 d-flex justify-content-center align-items-start">
    <div class="floatbar d-flex align-items-center" role="toolbar">
      <button aria-label="Refit"><svg class="ico" viewBox="0 0 20 20"><path d="M.5 1.500h17v17H.5z" fill="#fff" stroke="#8f8f8f"/><circle cx="10" cy="9" r="5" fill="#dff4fb" stroke="#2a7da3" stroke-width="1.500"/><path d="M14 13l5 6" stroke="#999" stroke-width="3"/></svg></button>
      <button aria-label="Zoom In"><svg class="ico" viewBox="0 0 20 20"><circle cx="8" cy="8" r="7" fill="#dff4fb" stroke="#2a7da3" stroke-width="1.300"/><path d="M8 4v8M4 8h8" stroke="#155f87" stroke-width="2.500"/><path d="M13 13l6 6" stroke="#999" stroke-width="3"/></svg></button>
      <button aria-label="Zoom Out"><svg class="ico" viewBox="0 0 20 20"><circle cx="8" cy="8" r="7" fill="#dff4fb" stroke="#2a7da3" stroke-width="1.300"/><path d="M4 8h8" stroke="#155f87" stroke-width="2.500"/><path d="M13 13l6 6" stroke="#999" stroke-width="3"/></svg></button>
      <button aria-label="Repaint"><svg class="ico" viewBox="0 0 20 20"><path d="M1 1h18v18H1z" fill="#5db2d6" stroke="#5f8ea1"/><path d="M1 4c10 0 16 3 11 8C10 15 6 18 1 18.500z" fill="#fff"/><path d="M6 17l11-9" stroke="#194f6c" stroke-width="2"/><path d="M1 2h18" stroke="#999" stroke-width="2"/></svg></button>
      <button class="more" aria-label="Rendering"><svg class="ico" viewBox="0 0 20 20"><path d="M11 6l4-3 5-2v10l-5 5-5-4z" fill="#8f8f8f"/><circle cx="14" cy="6" r="5" fill="url(#gGrey)"/><circle cx="6" cy="14" r="6" fill="url(#gGrey)"/></svg></button>
      <button class="more" aria-label="Display Style"><svg class="ico" viewBox="0 0 20 20"><path d="M1 5l4-4h14v13l-4 5H1z" fill="#80c9e8" stroke="#4da5c9"/><path d="M1.500 5.500h13v13h-13z" fill="#f4fbfe" stroke="#58acd0"/></svg></button>
      <button class="more" aria-label="Saved Orientations"><svg class="ico" viewBox="0 0 20 20"><path d="M1 10l4-8 7-1 6 6 1 4-3 7H4z" fill="url(#gBlue)" stroke="#2386b0"/><path d="M1 10h11l7-1M12 1l-1 9 1 8" fill="none" stroke="#2386b0"/><path d="M12.500 12.500h6v7h-6z" fill="#fff" stroke="#777"/></svg></button>
      <button aria-label="View Manager"><svg class="ico" viewBox="0 0 20 20"><path d="M1 1h16v17H1zM1 5h16M1 9h16M1 13h8M5 1v17" fill="#fafafa" stroke="#888"/><path d="M7 11h3l1-2h5l1 2h3v8H7z" fill="#4a4a4a"/><circle cx="13.500" cy="15" r="2.500" fill="#aaa" stroke="#eee"/></svg></button>
      <button aria-label="Perspective"><svg class="ico" viewBox="0 0 20 20"><path d="M1 4l17-3v14L8 19l-7-5z" fill="url(#gBlue)" stroke="#3a93ba"/><path d="M1 4l7 3v12M8 7l10-6M1 14l6-5h11M7 9V3" fill="none" stroke="#3a93ba"/></svg></button>
      <button class="more" aria-label="Section"><svg class="ico" viewBox="0 0 20 20"><path d="M1 6l5-5h13L1 19z" fill="#def4fb" stroke="#65b2cf"/><path d="M19 2v12l-5 5H2M14 6v13" fill="none" stroke="#999" stroke-dasharray="1 1"/><path d="M0 20L20 0" stroke="#1b6d94" stroke-width="1.600"/></svg></button>
      <button class="more" aria-label="Datum Display"><svg class="ico" viewBox="0 0 20 20"><path d="M1 1l5 5M6 1L1 6M13 1l-2 4M9 8l-2 4M6 14l-2 5" stroke="#806631" stroke-width="2"/><path d="M12 9v6h8M12 15l-3 4M10 10l2-2 2 2M17 13l3 2-3 2" fill="none" stroke="#91743a" stroke-width="1.500"/></svg></button>
      <button class="pressed" aria-label="Annotation Display"><svg class="ico" viewBox="0 0 20 20"><path d="M.5 1.500h11v6H.5z" fill="#fff6d6" stroke="#888"/><path d="M12 5h7l-4 5M13 8l2 4 3-3z" fill="#555" stroke="#555"/><path d="M9 16c3-4 8-4 11 0-3 4-8 4-11 0z" fill="#777" stroke="#444"/><circle cx="14.500" cy="16" r="2" fill="#fff" stroke="#333"/></svg></button>
      <button class="pressed" aria-label="Spin Center"><svg class="ico" viewBox="0 0 20 20"><path d="M4 4l6 6 6 0M10 10l-6 6" fill="none" stroke="#444" stroke-width="1.600"/><circle cx="4" cy="4" r="3" fill="#8fc97b" stroke="#4c8d3b"/><circle cx="17" cy="10" r="2.500" fill="#f08a8a" stroke="#cf4141"/><circle cx="4" cy="16" r="3" fill="#3b86ae" stroke="#1c658d"/></svg></button>
      <button aria-label="Simulate" disabled><svg class="ico" viewBox="0 0 20 20"><path d="M10 3l8 14H2z" fill="none" stroke="#adadad" stroke-width="3.500"/><path d="M10 9l3 6H7z" fill="#fff" stroke="#bbb"/><circle cx="16" cy="16" r="4" fill="#ccc" stroke="#999"/><path d="M15 14l3 2-3 2z" fill="#fff"/></svg></button>
      <button aria-label="Pause" disabled><svg class="ico" viewBox="0 0 20 20"><path d="M3 3h5v14H3zM12 3h5v14h-5z" fill="#9d9d9d"/></svg></button>
      <button aria-label="Probe" disabled><svg class="ico" viewBox="0 0 20 20"><path d="M0 3h20v13H1c9-1 9-8 0-9z" fill="url(#gGrey)" stroke="#ccc"/></svg></button>
    </div>

    <svg class="pointer" width="14" height="21" viewBox="0 0 14 21"><path d="M1 1v15.500l3.500-3.500 3 6.500 2.500-1-3-6.500h5z" fill="#fff" stroke="#111"/></svg>

    <svg class="model" viewBox="0 0 1320 1440" role="img" aria-label="Valve assembly">
      <defs>
        <linearGradient id="mBody" gradientUnits="userSpaceOnUse" x1="620" y1="540" x2="860" y2="960"><stop offset="0" stop-color="#a0a3a7"/><stop offset=".5" stop-color="#8b8c90"/><stop offset="1" stop-color="#707175"/></linearGradient>
        <linearGradient id="mBore" gradientUnits="userSpaceOnUse" x1="230" y1="780" x2="430" y2="1180"><stop offset="0" stop-color="#707175"/><stop offset=".5" stop-color="#88898d"/><stop offset="1" stop-color="#a0a2a6"/></linearGradient>
        <linearGradient id="mNeck" gradientUnits="userSpaceOnUse" x1="590" y1="0" x2="866" y2="0"><stop offset="0" stop-color="#9c9ea2"/><stop offset=".55" stop-color="#85868a"/><stop offset="1" stop-color="#707174"/></linearGradient>
        <linearGradient id="mRim" gradientUnits="userSpaceOnUse" x1="288" y1="0" x2="858" y2="0"><stop offset="0" stop-color="#c4c2c1"/><stop offset=".65" stop-color="#b7b5b4"/><stop offset=".85" stop-color="#969493"/><stop offset="1" stop-color="#868483"/></linearGradient>
        <linearGradient id="mArm" gradientUnits="userSpaceOnUse" x1="340" y1="0" x2="594" y2="0"><stop offset="0" stop-color="#414b52"/><stop offset=".4" stop-color="#576168"/><stop offset=".72" stop-color="#505a61"/><stop offset="1" stop-color="#343a3e"/></linearGradient>
        <linearGradient id="mEye" gradientUnits="userSpaceOnUse" x1="401" y1="0" x2="525" y2="0"><stop offset="0" stop-color="#33393d"/><stop offset=".6" stop-color="#50595f"/><stop offset="1" stop-color="#5f676b"/></linearGradient>
        <linearGradient id="mCap" gradientUnits="userSpaceOnUse" x1="407" y1="0" x2="724" y2="0"><stop offset="0" stop-color="#454f55"/><stop offset=".5" stop-color="#5d676c"/><stop offset="1" stop-color="#3c4347"/></linearGradient>
        <linearGradient id="mPin" x1="0" x2="1" y1="0" y2="0"><stop offset="0" stop-color="#ad5e25"/><stop offset=".5" stop-color="#ba6630"/><stop offset="1" stop-color="#84451e"/></linearGradient>
        <linearGradient id="mLug" x1="0" x2="1" y1="0" y2="1"><stop offset="0" stop-color="#a3a5a8"/><stop offset=".5" stop-color="#8d8e92"/><stop offset="1" stop-color="#6c6d70"/></linearGradient>
        <clipPath id="cBore"><ellipse rx="1" ry="1" transform="matrix(233.500 55 0 260 419.500 928)"/></clipPath>
        <clipPath id="cLug"><ellipse cx="1071" cy="592" rx="46" ry="54" transform="rotate(-18 1071 592)"/></clipPath>
      </defs>
      <path d="M300 318C250 340 233 390 235 430C238 480 255 510 272 532L350 500V330z" fill="#a3a7a9"/>
      <path d="M650 1280C690 1335 735 1360 775 1358C800 1356 830 1342 855 1328C895 1305 912 1270 910 1220L907 1120L700 1240z" fill="#77787b"/>
      <path d="M650 1280C690 1335 735 1358 770 1357C820 1353 856 1315 859 1255V1150z" fill="#a4a8aa"/>
      <path d="M706 1255C720 1275 740 1283 760 1280C780 1275 789 1255 788 1240L756 1220z" fill="#8f9194"/><path d="M756 1220C762 1238 775 1248 789 1250C790 1232 786 1216 779 1208z" fill="#e8e9ed"/>
      <path d="M272 528L300 510L860 376C905 396 950 430 985 470C1060 555 1115 680 1121 800C1124 900 1095 990 1040 1050C1020 1073 1000 1087 975 1098L907 1137L652 1281L420 1200L250 620z" fill="url(#mBody)"/>
      <path d="M293 400V512C340 505 420 520 600 564C680 580 720 596 775 597C830 595 868 550 866 490L858 390z" fill="url(#mNeck)"/>
      <path d="M293 400V514L350 512V400z" fill="#a0a2a5"/>
      <path d="M288 345L294 421C310 445 330 458 345 465L600 500L650 490C760 480 850 440 858 385V320z" fill="url(#mRim)"/>
      <ellipse rx="1" ry="1" transform="matrix(285 -12 0 92 573 338)" fill="#c2c2c2"/>
      <path d="M750 302V330C760 348 812 346 824 330V302z" fill="#474e51"/><ellipse cx="787" cy="302" rx="37" ry="14" fill="#3d4446"/><ellipse cx="780" cy="299" rx="16" ry="6" fill="#303537"/>
      <path d="M262 534C285 520 310 512 345 512L480 545C560 590 600 620 640 680L300 700z" fill="#a4a8aa"/>
      <ellipse rx="1" ry="1" transform="matrix(350.500 82 0 393.500 419.500 926)" fill="#a5a9ab"/>
      <g clip-path="url(#cBore)">
        <path d="M150 600H720V1250H150z" fill="url(#mBore)"/>
        <ellipse cx="583" cy="1088" rx="58" ry="32" fill="#a85c27"/>
        <path d="M385 640C320 725 300 790 306 850C318 975 450 1095 627 1098C700 1000 700 640 385 640z" fill="#ddbc5c"/>
      </g>
      <ellipse cx="596" cy="977" rx="38" ry="40" fill="#3a4042"/><ellipse cx="593" cy="980" rx="31" ry="34" fill="#4a5152"/><path d="M575 979l10 15" stroke="#24292a" stroke-width="7"/><path d="M604 995l5-9" stroke="#8a7a35" stroke-width="4"/>
      <path d="M434 838L432 770" stroke="#2df03a" stroke-width="3"/><path d="M434 838L496 850" stroke="#ff3030" stroke-width="3"/><path d="M434 838L394 860" stroke="#30f6f6" stroke-width="3"/>
      <path d="M426 763h12v12h-12z" fill="#2dfb32"/><path d="M489 843h14v14h-14z" fill="#ff2f35"/><path d="M385 852h17v17h-17z" fill="#2ff8ff"/>
      <path d="M980 470L1060 436C1140 408 1220 480 1237 570C1246 630 1225 675 1190 693L1110 730L1062 747z" fill="url(#mLug)"/>
      <path d="M937 500L1030 464C1120 440 1180 520 1190 600C1192 660 1170 695 1135 712L1062 747C1050 660 1005 575 937 500z" fill="#a5a9ab"/>
      <path d="M1062 747C1050 660 1005 575 937 500" fill="none" stroke="#e3e5e7" stroke-width="5"/>
      <path d="M937 500L1030 464C1100 445 1160 495 1184 565" fill="none" stroke="#d0d2d4" stroke-width="4"/>
      <ellipse cx="1071" cy="592" rx="46" ry="54" transform="rotate(-18 1071 592)" fill="#87898c"/>
      <path d="M1074 535C1070 570 1090 610 1125 617V530z" fill="#e8e9ed" clip-path="url(#cLug)"/>
      <path d="M722 150L729 290C722 308 708 315 697 321L592 558L585 450z" fill="#393f42"/>
      <path d="M407 185L355 430L340 460L590 480L722 200L600 150z" fill="#5f676b"/>
      <path d="M407 158L409 200C440 240 500 250 570 245C650 240 715 215 723 190V148z" fill="url(#mCap)"/>
      <ellipse rx="1" ry="1" transform="matrix(158 -6 0 54 564 153)" fill="#5e676a"/>
      <path d="M340 455L344 598C370 642 560 645 593 588L590 455z" fill="url(#mArm)"/>
      <path d="M340 458C350 435 380 425 465 420L590 455C580 520 350 512 340 458z" fill="#5f676b"/>
      <ellipse cx="463" cy="461" rx="62" ry="22" fill="url(#mEye)"/>
      <ellipse cx="564" cy="157" rx="80" ry="27" fill="#a6571f"/><path d="M537 178h33v14h-33z" fill="#a6571f"/>
      <path d="M508 85V155C520 175 600 178 618 152L615 80z" fill="url(#mPin)"/>
      <path d="M508 85C507 70 525 54 561 53C600 54 612 65 615 82C605 100 520 102 508 85z" fill="#cc702f"/>
      <ellipse cx="561" cy="69" rx="41" ry="15" fill="#a95b26"/>
    </svg>
  </section>
</main>

<footer class="status d-flex align-items-center">
  <div class="status-left d-flex align-items-center">
    <button class="pressed" aria-label="Toggle navigator"><svg class="ico" viewBox="0 0 20 20"><path d="M1 2h18v15H1zM1 5h18" fill="#fafafa" stroke="#777"/><path d="M1 6h5v12H1z" fill="#8ed3ee" stroke="#1b6d93"/><path d="M8 16c3-4 8-4 11 0-3 4-8 4-11 0z" fill="#555" stroke="#333"/><circle cx="13.500" cy="16" r="1.500" fill="#ddd"/></svg></button>
    <button aria-label="Web browser"><svg class="ico" viewBox="0 0 20 20"><circle cx="10" cy="11" r="7.500" fill="#2f8fc4"/><path d="M5 8c3-5 7-2 5 1s-3 5 0 7-7-1-5-8z" fill="#a5dbf3"/><path d="M3 19C-3 16 8-1 17 1c5 2-2 10-5 12" fill="none" stroke="#777" stroke-width="1.300"/></svg></button>
    <button aria-label="Full screen"><svg class="ico" viewBox="0 0 20 20"><path d="M1 1h18v18H1z" fill="#e4f1f6" stroke="#286f8e" stroke-width="1.500"/></svg></button>
    <span class="vline"></span>
  </div>
  <div class="msg d-flex align-items-center" role="status"><i></i><span>Component redefined successfully.</span></div>
  <div class="status-right ms-auto d-flex align-items-center align-self-stretch">
    <span class="vline"></span><span class="vline"></span>
    <div class="box seek d-flex">
      <button class="seek-main" aria-label="Find"><svg width="22" height="22" viewBox="0 0 22 22"><path d="M5 1h5v4h2V1h5v4l4 6v10h-8v-8H9v8H1V11l4-6z" fill="#4e4e4e"/><path d="M4 10l2-4v13H3z" fill="#999"/><path d="M17 7l2 5v7h-2z" fill="#888"/></svg></button>
      <button class="seek-more" aria-label="Find options"><i class="tri"></i></button>
    </div>
    <span class="vline"></span>
    <button class="box boxbtn" aria-label="Selection preview"><svg width="24" height="24" viewBox="0 0 24 24"><path d="M1 6l5-5h17v16l-5 6H1zM1 6h17v17M18 6l5-5" fill="#fff" stroke="#555" stroke-width="1.500"/><path d="M4 11l2-2h8v7l-3 4H4z" fill="#ffe3a8" stroke="#e0a33d"/><path d="M8 9l2-2h6v6l-2 2H8z" fill="#9ddcf3" stroke="#2c92bd"/></svg></button>
  </div>
  <div class="pick position-relative">
    <select aria-label="Selection filter"><option>Geometry</option><option>Datums</option></select>
    <span><i class="tri"></i></span>
  </div>
</footer>
</body>
</html>
